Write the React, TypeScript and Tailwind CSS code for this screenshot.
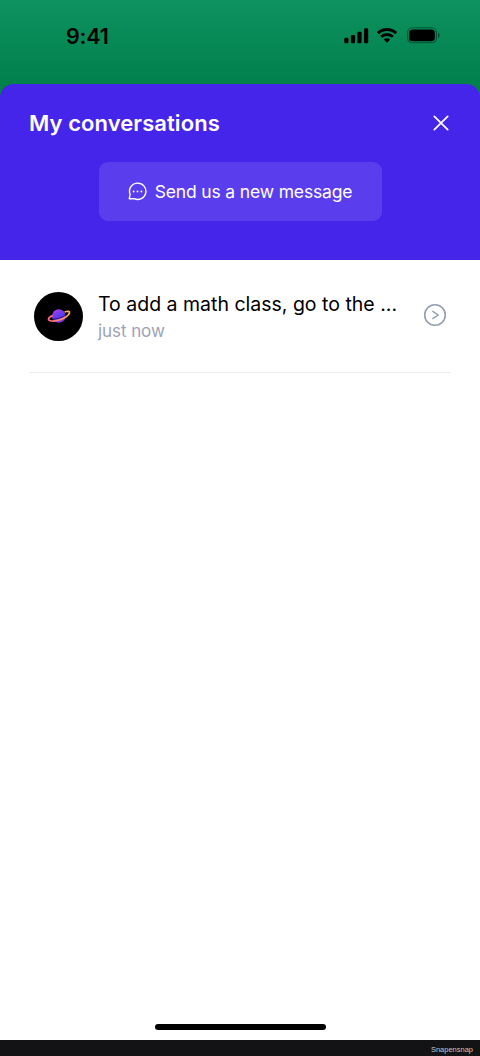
import { ReactNode } from 'react';

interface Conversation {
    id: string;
    preview: string;
    time: string;
}

const conversations: Conversation[] = [
    { id: 'math-class', preview: 'To add a math class, go to the ...', time: 'just now' },
];

const SignalIcon = () => (
    <svg width="25" height="16" viewBox="0 0 25 16" fill="black">
        <rect x="0.3" y="9.7" width="4.2" height="5.6" rx="1.3" />
        <rect x="6.9" y="7" width="4.2" height="8.3" rx="1.3" />
        <rect x="13.4" y="3.7" width="4.2" height="11.6" rx="1.3" />
        <rect x="20" y="0.3" width="4.2" height="15" rx="1.3" />
    </svg>
);

const WifiIcon = () => (
    <svg width="20" height="15" viewBox="0 0 20 15" fill="none" stroke="black" strokeWidth="2.9">
        <path d="M0.9 5.2a13 13 0 0 1 18.2 0" />
        <path d="M4.2 8.8a8.3 8.3 0 0 1 11.6 0" />
        <path d="M10 14.8l-3.2-3.2a4.6 4.6 0 0 1 6.4 0z" fill="black" stroke="none" />
    </svg>
);

const BatteryIcon = () => (
    <svg width="33" height="17" viewBox="0 0 33 17">
        <rect x="0.6" y="0.8" width="28.8" height="15" rx="4.6" fill="none" stroke="black" strokeOpacity="0.4" strokeWidth="1.1" />
        <rect x="2.2" y="2.4" width="25.6" height="11.8" rx="3.3" fill="black" />
        <path d="M31 5.7v5.2c1-.4 1.6-1.4 1.6-2.6s-.6-2.2-1.6-2.6z" fill="black" fillOpacity="0.45" />
    </svg>
);

const ChatIcon = () => (
    <svg width="19" height="19" viewBox="0 0 19 19" fill="none" stroke="white" strokeWidth="1.35" strokeLinejoin="round">
        <path d="M9.6 1.1a8.2 8.2 0 1 1-3.4 15.6H1.3l.8-4.4A8.2 8.2 0 0 1 9.6 1.1z" />
        <g fill="white" stroke="none">
            <circle cx="5.6" cy="9.5" r="0.9" />
            <circle cx="9.5" cy="9.5" r="0.9" />
            <circle cx="13.4" cy="9.5" r="0.9" />
        </g>
    </svg>
);

const PlanetLogo = () => (
    <svg width="24" height="16" viewBox="0 0 24 16" fill="none">
        <defs>
            <linearGradient id="planet" x1="8" y1="2" x2="15" y2="14" gradientUnits="userSpaceOnUse">
                <stop stopColor="#a63cf0" />
                <stop offset="0.5" stopColor="#5b3cf5" />
                <stop offset="1" stopColor="#8b32e8" />
            </linearGradient>
            <linearGradient id="ring" x1="1" y1="12" x2="23" y2="4" gradientUnits="userSpaceOnUse">
                <stop stopColor="#ff6088" />
                <stop offset="0.5" stopColor="#ff8a68" />
                <stop offset="1" stopColor="#ffb455" />
            </linearGradient>
        </defs>
        <circle cx="11.8" cy="8" r="6.8" fill="url(#planet)" />
        {/* dark gap between the planet and the front of the ring */}
        <path d="M5.4 11.4C11 11 16 9 18.6 7" stroke="#14082e" strokeWidth="0.7" />
        <path
            d="M18.2 3.8C21 3 22.7 3.3 22.5 4.9C22.2 7.4 17.4 10.6 11.7 12.1C6.2 13.5 1.6 13.4 1.5 11.3C1.4 10.2 2.9 8.9 5.2 7.9"
            stroke="url(#ring)"
            strokeWidth="1.7"
            strokeLinecap="round"
        />
    </svg>
);

const StatusBar = () => (
    <div className="flex h-[84px] shrink-0 items-start justify-between pl-[66px] pr-10">
        <span className="mt-[21px] text-[21.5px] leading-[30px] font-[590] tracking-[-0.2px] text-black">9:41</span>
        <div className="mt-[27px] flex items-center">
            <SignalIcon />
            <div className="ml-2 mr-[10px]"><WifiIcon /></div>
            <BatteryIcon />
        </div>
    </div>
);

const SheetHeader = ({ children }: { children: ReactNode }) => (
    <header className="h-44 shrink-0 rounded-t-[14px] bg-[#4625eb] px-[29px] text-white">
        <div className="flex h-[78px] items-center justify-between">
            <h1 className="text-[22px] leading-7 font-[580] tracking-[0.07px]">My conversations</h1>
            <button aria-label="Close" className="mr-0.5">
                <svg width="16" height="16" viewBox="0 0 16 16" stroke="white" strokeWidth="1.7" strokeLinecap="round">
                    <path d="M1.3 1.3l13.4 13.4M14.7 1.3L1.3 14.7" />
                </svg>
            </button>
        </div>
        {children}
    </header>
);

const ConversationRow = ({ preview, time }: { preview: string; time: string }) => (
    <li className="flex h-[113px] items-center border-b border-[#eaedf1] pl-[5px] pr-1">
        <div className="flex size-[49px] shrink-0 items-center justify-center rounded-full bg-black">
            <PlanetLogo />
        </div>
        <div className="mt-0.5 ml-[15px] flex-1 whitespace-nowrap">
            <p className="text-[19.5px] leading-[27px] text-black">{preview}</p>
            <p className="text-[17px] leading-[26px] tracking-[-0.07px] text-[#9ca3b5]">{time}</p>
        </div>
        <svg width="24" height="24" viewBox="0 0 24 24" fill="none" stroke="#929db0" strokeWidth="1.6" className="mb-0.5">
            <circle cx="12" cy="12" r="10.3" />
            <path d="M9.4 8.2l5.6 3.8-5.6 3.8" strokeWidth="1.4" />
        </svg>
    </li>
);

export default function App() {
    return (
        <div className="flex h-[1056px] w-[480px] flex-col bg-linear-to-b from-[#0e925f] to-[#007f4a] to-[90px] font-['Inter',sans-serif]">
            <StatusBar />
            <SheetHeader>
                <button className="mx-auto flex h-[59px] w-[283px] items-center justify-center gap-2 rounded-[9px] bg-[#5a3eed] text-[17.5px] tracking-[-0.15px]">
                    <ChatIcon />
                    <span className="mt-px">Send us a new message</span>
                </button>
            </SheetHeader>
            <main className="flex flex-1 flex-col bg-white px-[29px]">
                <ul>
                    {conversations.map((c) => (
                        <ConversationRow key={c.id} preview={c.preview} time={c.time} />
                    ))}
                </ul>
                <div className="mx-auto mt-auto mb-2.5 h-1.5 w-[171px] rounded-full bg-black" />
            </main>
            <footer className="flex h-4 items-center justify-end bg-[#131315] pr-[7px] pt-1 font-['Liberation_Sans',sans-serif] text-[7.5px] leading-none text-[#c4c4c6]">
                Snapensnap
            </footer>
        </div>
    );
}
